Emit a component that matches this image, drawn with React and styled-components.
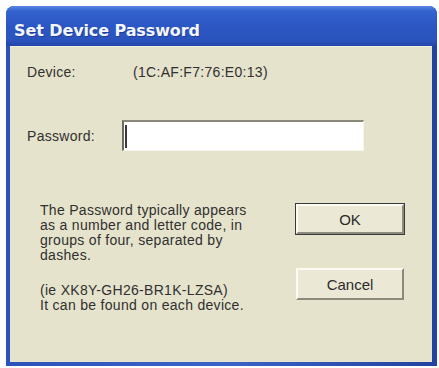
import React from 'react';
import styled, { createGlobalStyle } from 'styled-components';

const GlobalStyle = createGlobalStyle`
  html, body {
    margin: 0;
    padding: 0;
    background: #fdfdfd;
  }
  body {
    font-family: "Liberation Sans", Arial, sans-serif;
  }
`;

const Page = styled.div`
  width: 439px;
  height: 368px;
  padding: 6px 0 0 6px;
  box-sizing: border-box;
`;

const Window = styled.div`
  width: 431px;
  height: 360px;
  display: flex;
  flex-direction: column;
  border-radius: 8px 8px 0 0;
  overflow: hidden;
  background: #2c55be;
`;

const TitleBar = styled.div`
  height: 40px;
  flex-shrink: 0;
  display: flex;
  align-items: center;
  padding: 8px 0 0 8px;
  box-sizing: border-box;
  background: linear-gradient(180deg, #5b86e4 0%, #3462cf 12%, #2b57c4 50%, #2a53bd 85%, #2347a8 100%);
`;

const Title = styled.span`
  font-family: "DejaVu Sans", Verdana, sans-serif;
  font-weight: bold;
  font-size: 16px;
  color: #f4f6ff;
  letter-spacing: -0.1px;
  text-shadow: 1px 1px 0 rgba(20, 40, 110, 0.5);
`;

const Frame = styled.div`
  flex: 1;
  display: flex;
  padding: 0 5px 4px 4px;
  background: linear-gradient(90deg, #2b52b8 0%, #3a63c8 50%, #22439f 100%);
`;

const Body = styled.div`
  flex: 1;
  display: flex;
  flex-direction: column;
  background: #e6e3cc;
  padding: 16px 28px 0 17px;
  color: #303030;
  font-size: 14px;
  letter-spacing: 0.3px;
  border-top: 1px solid #f1efe0;
  box-sizing: border-box;
`;

const Row = styled.div`
  display: flex;
  align-items: center;
  height: ${({ h }) => h}px;
  margin-top: ${({ mt }) => mt || 0}px;
`;

const Label = styled.span`
  width: ${({ w }) => w}px;
  flex-shrink: 0;
`;

const Input = styled.div`
  width: 242px;
  height: 31px;
  box-sizing: border-box;
  background: #fff;
  border-top: 2px solid #8a8878;
  border-left: 2px solid #6e6c60;
  border-right: 1px solid #f7f6ee;
  border-bottom: 1px solid #f7f6ee;
  display: flex;
  align-items: center;
  padding-left: 1px;
`;

const Caret = styled.span`
  width: 2px;
  height: 23px;
  background: #3a3a3a;
`;

const Lower = styled.div`
  display: grid;
  grid-template-columns: 1fr 108px;
  margin-top: 52px;
  padding-left: 13px;
`;

const Notes = styled.div`
  display: flex;
  flex-direction: column;
  gap: 20px;
`;

const Text = styled.p`
  margin: 0;
  line-height: 15px;
`;

const Buttons = styled.div`
  display: flex;
  flex-direction: column;
  gap: 34px;
  padding-top: 1px;
`;

const Button = styled.div`
  height: ${({ primary }) => (primary ? 30 : 32)}px;
  box-sizing: border-box;
  display: flex;
  align-items: center;
  justify-content: center;
  background: #ebe8d6;
  font-size: 15px;
  letter-spacing: 0;
  color: #2b2b2b;
  border-top: 2px solid #fbfaf3;
  border-left: 2px solid #fbfaf3;
  border-right: 2px solid #8c8a7c;
  border-bottom: 2px solid #8c8a7c;
  box-shadow: ${({ primary }) => (primary ? '0 0 0 1px #3a3a3a' : 'none')};
`;

export default function App() {
  return (
    <>
      <GlobalStyle />
      <Page>
        <Window>
          <TitleBar>
            <Title>Set Device Password</Title>
          </TitleBar>
          <Frame>
            <Body>
              <Row h={18}>
                <Label w={106}>Device:</Label>
                <span>(1C:AF:F7:76:E0:13)</span>
              </Row>
              <Row h={31} mt={39}>
                <Label w={95}>Password:</Label>
                <Input>
                  <Caret />
                </Input>
              </Row>
              <Lower>
                <Notes>
                  <Text>
                    The Password typically appears<br />
                    as a number and letter code, in<br />
                    groups of four, separated by<br />
                    dashes.
                  </Text>
                  <Text>
                    (ie XK8Y-GH26-BR1K-LZSA)<br />
                    It can be found on each device.
                  </Text>
                </Notes>
                <Buttons>
                  <Button primary>OK</Button>
                  <Button>Cancel</Button>
                </Buttons>
              </Lower>
            </Body>
          </Frame>
        </Window>
      </Page>
    </>
  );
}
